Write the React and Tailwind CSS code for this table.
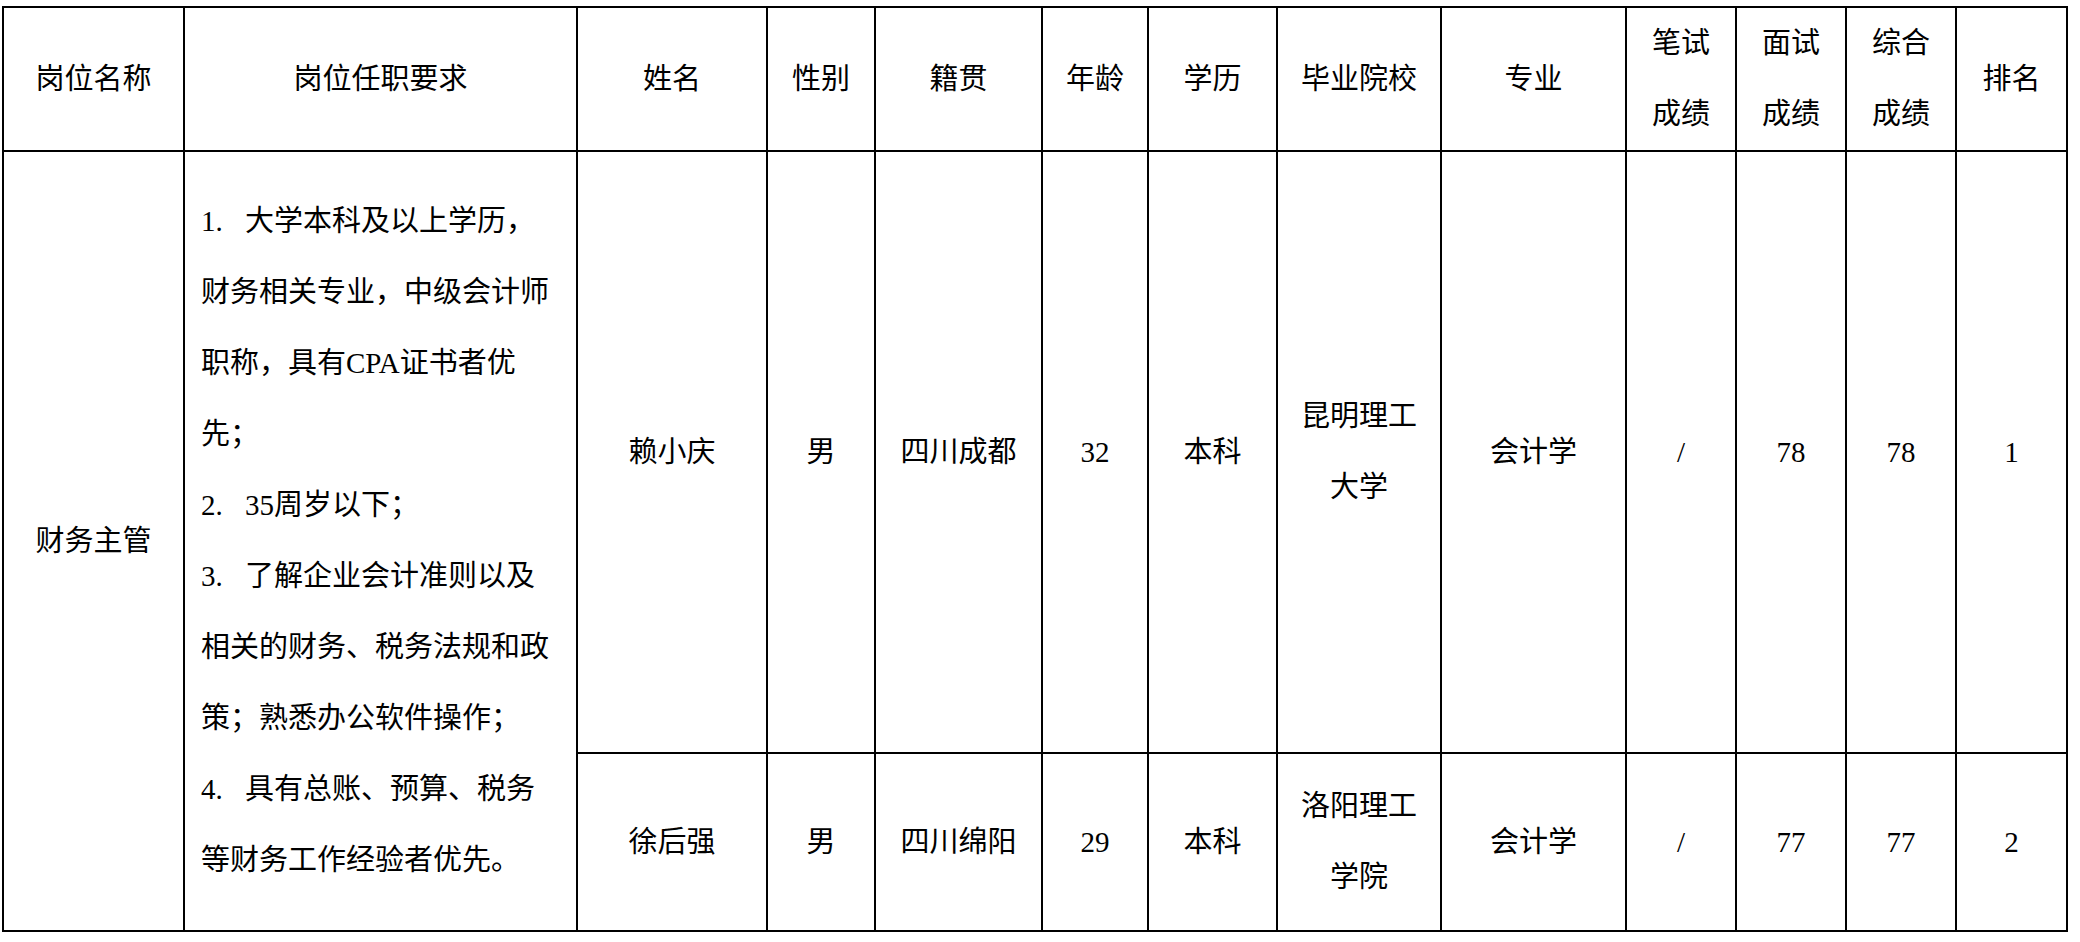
import React from 'react';

const cols = [181, 393, 190, 108, 167, 106, 129, 164, 185, 110, 110, 110, 111];

const requirements = [
    ['1.', '大学本科及以上学历，'],
    [null, '财务相关专业，中级会计师'],
    [null, '职称，具有CPA证书者优'],
    [null, '先；'],
    ['2.', '35周岁以下；'],
    ['3.', '了解企业会计准则以及'],
    [null, '相关的财务、税务法规和政'],
    [null, '策；熟悉办公软件操作；'],
    ['4.', '具有总账、预算、税务'],
    [null, '等财务工作经验者优先。'],
];

const candidates = [
    { name: '赖小庆', gender: '男', origin: '四川成都', age: '32', edu: '本科', school: ['昆明理工', '大学'], major: '会计学', written: '/', interview: '78', total: '78', rank: '1' },
    { name: '徐后强', gender: '男', origin: '四川绵阳', age: '29', edu: '本科', school: ['洛阳理工', '学院'], major: '会计学', written: '/', interview: '77', total: '77', rank: '2' },
];

const cell = 'border-2 border-black text-center align-middle p-0';

const App = () => {
    return (
        <div className="min-h-screen bg-white text-black font-['Liberation_Serif','Noto_Sans_CJK_SC',serif] text-[29px] leading-[71px] pt-[6px] pl-[2px]">
            <table className="table-fixed border-collapse w-[2066px]">
                <colgroup>
                    {cols.map((w, i) => (
                        <col key={i} style={{ width: w }} />
                    ))}
                </colgroup>
                <tbody>
                    {/* HEADER */}
                    <tr className="h-[144px]">
                        <td className={cell}>岗位名称</td>
                        <td className={cell}>岗位任职要求</td>
                        <td className={cell}>姓名</td>
                        <td className={cell}>性别</td>
                        <td className={cell}>籍贯</td>
                        <td className={cell}>年龄</td>
                        <td className={cell}>学历</td>
                        <td className={cell}>毕业院校</td>
                        <td className={cell}>专业</td>
                        <td className={cell}><div>笔试</div><div>成绩</div></td>
                        <td className={cell}><div>面试</div><div>成绩</div></td>
                        <td className={cell}><div>综合</div><div>成绩</div></td>
                        <td className={cell}>排名</td>
                    </tr>

                    {candidates.map((c, i) => (
                        <tr key={c.name} className={i === 0 ? 'h-[602px]' : 'h-[178px]'}>
                            {i === 0 && (
                                <>
                                    <td rowSpan={2} className={cell}>财务主管</td>
                                    <td rowSpan={2} className="border-2 border-black align-middle text-left pl-[16px] pr-0">
                                        {requirements.map(([num, text], j) => (
                                            <div key={j} className="whitespace-nowrap">
                                                {num && <span className="inline-block w-[44px]">{num}</span>}
                                                {text}
                                            </div>
                                        ))}
                                    </td>
                                </>
                            )}
                            <td className={cell}>{c.name}</td>
                            <td className={cell}>{c.gender}</td>
                            <td className={cell}>{c.origin}</td>
                            <td className={cell}>{c.age}</td>
                            <td className={cell}>{c.edu}</td>
                            <td className={cell}>
                                {c.school.map((s) => (
                                    <div key={s}>{s}</div>
                                ))}
                            </td>
                            <td className={cell}>{c.major}</td>
                            <td className={cell}>{c.written}</td>
                            <td className={cell}>{c.interview}</td>
                            <td className={cell}>{c.total}</td>
                            <td className={cell}>{c.rank}</td>
                        </tr>
                    ))}
                </tbody>
            </table>
        </div>
    );
};

export default App;
